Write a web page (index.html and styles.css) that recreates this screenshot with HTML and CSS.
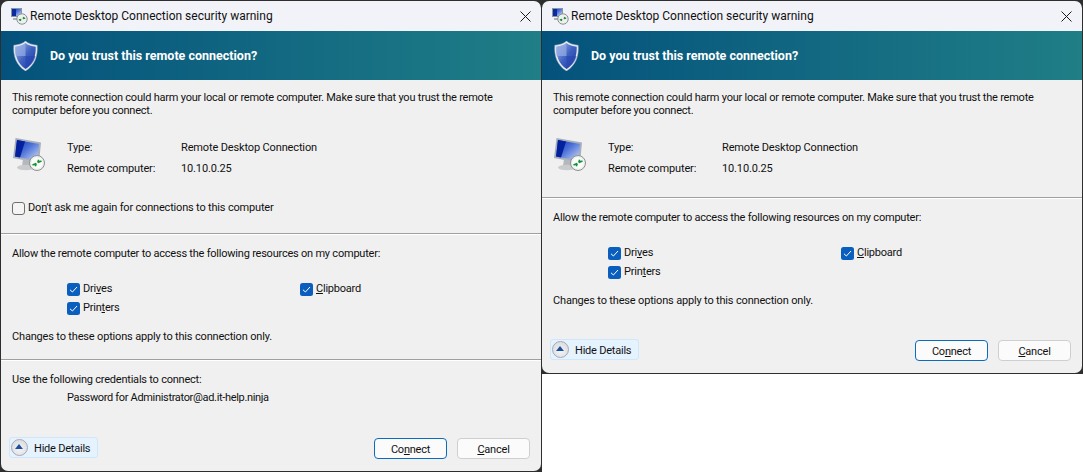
FILE: index.html
```html
<!DOCTYPE html>
<html lang="en">
<head>
<meta charset="utf-8">
<title>Remote Desktop Connection security warning</title>
<link rel="stylesheet" href="styles.css">
</head>
<body>
<svg class="defs" width="0" height="0" aria-hidden="true">
  <defs>
    <linearGradient id="sh" x1="0" y1="0" x2="1" y2="1"><stop offset="0" stop-color="#a9bdea"/><stop offset=".5" stop-color="#3f62c2"/><stop offset="1" stop-color="#1a359a"/></linearGradient>
    <linearGradient id="scr" x1="0" y1="0" x2="1" y2="1"><stop offset="0" stop-color="#0a2fb0"/><stop offset=".45" stop-color="#4a70d8"/><stop offset="1" stop-color="#d0dcf4"/></linearGradient>
    <symbol id="app" viewBox="0 0 18 18">
      <path d="M1 1h11v9H1z" fill="#8b95a8"/><path d="M2 2h9v7H2z" fill="url(#scr)"/><path d="M2 2h4v7H2z" fill="#0c2a9c"/>
      <path d="M3 11h6v2H3z" fill="#aab0ba"/>
      <circle cx="12" cy="12" r="5.200" fill="#eef0f0" stroke="#8a9090"/>
      <path d="M8.800 12.800 11 12.300M11 12.300 10.200 14M15.200 11.200 13 11.700M13 11.700 13.800 10" stroke="#1f8f35" stroke-width="1.200" fill="none"/>
    </symbol>
    <symbol id="pc" viewBox="0 0 32 34">
      <path d="M2.500 0 28 4.500 26 25 0 20z" fill="#a6aebb"/>
      <path d="M4 2 26 6 24.300 22.500 2 18.500z" fill="url(#scr)"/>
      <path d="M4 2 12 3.500 7 19.400 2 18.500z" fill="#04209c"/>
      <path d="M10 21 20 23v5H9z" fill="#b4b8bc"/>
      <ellipse cx="13" cy="29.500" rx="9" ry="2.800" fill="#c9cbcd"/>
      <circle cx="24" cy="25" r="7.500" fill="#eef0ee" stroke="#8a9290"/>
      <circle cx="24" cy="25" r="5.600" fill="#fafcfa"/>
      <path d="M19.500 27 23.200 25.500M23.200 25.500 22.300 28.300M28.500 23 24.800 24.500M24.800 24.500 25.700 21.700" stroke="#17913a" stroke-width="1.700" fill="none"/>
    </symbol>
    <symbol id="shield" viewBox="0 0 25 30">
      <path d="M12.500 0C10 2.500 5 4 .8 4.200 0 15 3 24 12.500 30 22 24 25 15 24.200 4.200 20 4 15 2.500 12.500 0z" fill="#e8ecf4" stroke="#9aa6c0" stroke-width=".5"/>
      <path d="M12.500 2C10 4.200 6 5.500 2.300 5.700 1.900 15 5 23 12.500 27.900 20 23 23.100 15 22.700 5.700 19 5.500 15 4.200 12.500 2z" fill="url(#sh)"/>
      <path d="M12.500 2V15H2.500C2.200 12 2.200 9 2.300 5.700 6 5.500 10 4.200 12.500 2z" fill="#95ade4" opacity=".7"/>
      <path d="M12.500 15H22.500C21.600 20 18.500 24 12.500 27.900z" fill="#2a49b0" opacity=".7"/>
    </symbol>
    <symbol id="check" viewBox="0 0 13 13">
      <rect width="13" height="13" rx="2.500" fill="#0a5fbe"/>
      <path d="M3 6.800 5.400 9 10 4" stroke="#fff" fill="none"/>
    </symbol>
    <symbol id="close" viewBox="0 0 11 11">
      <path d="M.5.500 10.500 10.500M10.500.500.500 10.500" stroke="#1a1a1a" fill="none"/>
    </symbol>
  </defs>
</svg>

<main class="desktop">
  <section class="win win-a">
    <header class="titlebar">
      <svg class="app-ico"><use href="#app"/></svg>
      <span class="title">Remote Desktop Connection security warning</span>
      <svg class="close-ico"><use href="#close"/></svg>
    </header>
    <div class="banner">
      <svg class="shield"><use href="#shield"/></svg>
      <strong>Do you trust this remote connection?</strong>
    </div>
    <div class="body">
      <div class="sec sec-info">
        <p class="msg">This remote connection could harm your local or remote computer. Make sure that you trust the remote<br>computer before you connect.</p>
        <div class="facts">
          <svg class="pc"><use href="#pc"/></svg>
          <dl class="rows">
            <dt>Type:</dt><dd>Remote Desktop Connection</dd>
            <dt>Remote computer:</dt><dd>10.10.0.25</dd>
          </dl>
        </div>
        <label class="dont"><span class="box"></span><span>Do<u>n</u>'t ask me again for connections to this computer</span></label>
      </div>
      <div class="sec sec-res">
        <p>Allow the remote computer to access the following resources on my computer:</p>
        <div class="opts">
          <div class="opt"><svg class="chk"><use href="#check"/></svg><span>Dri<u>v</u>es</span></div>
          <div class="opt"><svg class="chk"><use href="#check"/></svg><span><u>C</u>lipboard</span></div>
          <div class="opt"><svg class="chk"><use href="#check"/></svg><span>Prin<u>t</u>ers</span></div>
        </div>
        <p class="note">Changes to these options apply to this connection only.</p>
      </div>
      <div class="sec sec-cred">
        <p>Use the following credentials to connect:</p>
        <p class="cred">Password for Administrator@ad.it-help.ninja</p>
      </div>
      <footer class="foot">
        <div class="details"><span class="chev"></span><span class="details-label">Hide Details</span></div>
        <div class="btns">
          <div class="btn primary">Co<u>n</u>nect</div>
          <div class="btn"><u>C</u>ancel</div>
        </div>
      </footer>
    </div>
  </section>

  <section class="win win-b">
    <header class="titlebar">
      <svg class="app-ico"><use href="#app"/></svg>
      <span class="title">Remote Desktop Connection security warning</span>
      <svg class="close-ico"><use href="#close"/></svg>
    </header>
    <div class="banner">
      <svg class="shield"><use href="#shield"/></svg>
      <strong>Do you trust this remote connection?</strong>
    </div>
    <div class="body">
      <div class="sec sec-info">
        <p class="msg">This remote connection could harm your local or remote computer. Make sure that you trust the remote<br>computer before you connect.</p>
        <div class="facts">
          <svg class="pc"><use href="#pc"/></svg>
          <dl class="rows">
            <dt>Type:</dt><dd>Remote Desktop Connection</dd>
            <dt>Remote computer:</dt><dd>10.10.0.25</dd>
          </dl>
        </div>
      </div>
      <div class="sec sec-res">
        <p>Allow the remote computer to access the following resources on my computer:</p>
        <div class="opts">
          <div class="opt"><svg class="chk"><use href="#check"/></svg><span>Dri<u>v</u>es</span></div>
          <div class="opt"><svg class="chk"><use href="#check"/></svg><span><u>C</u>lipboard</span></div>
          <div class="opt"><svg class="chk"><use href="#check"/></svg><span>Prin<u>t</u>ers</span></div>
        </div>
        <p class="note">Changes to these options apply to this connection only.</p>
      </div>
      <footer class="foot">
        <div class="details"><span class="chev"></span><span class="details-label">Hide Details</span></div>
        <div class="btns">
          <div class="btn primary">Co<u>n</u>nect</div>
          <div class="btn"><u>C</u>ancel</div>
        </div>
      </footer>
    </div>
  </section>
</main>
</body>
</html>
```

FILE: styles.css
```css
* { box-sizing: border-box; }
html, body { margin: 0; height: 100%; background: #fff; overflow: hidden; }
body {
  font-family: Roboto, "Liberation Sans", sans-serif;
  font-size: 11px;
  letter-spacing: -0.22px;
  line-height: 14px;
  color: #111;
}
.defs { position: absolute; }
p { margin: 0; }
u { text-underline-offset: 1px; text-decoration-thickness: 1px; }

.desktop { display: flex; align-items: flex-start; width: 1083px; height: 472px; }
.win {
  display: flex;
  flex-direction: column;
  border: 1px solid #2e2e2e;
  background: #2e2e2e;
}
.win-a { width: 542px; height: 472px; }
.win-b { width: 541px; height: 374px; border-left: 0; }

.titlebar {
  display: flex;
  align-items: center;
  height: 30px;
  padding: 0 10px 0 9px;
  border-radius: 7px 7px 0 0;
  background: #f2f3f9;
  font-size: 12px;
  letter-spacing: 0;
}
.app-ico { width: 18px; height: 18px; margin-right: 2px; }
.title { flex: 1; }
.close-ico { width: 11px; height: 11px; }

.banner {
  display: flex;
  align-items: center;
  height: 49px;
  padding-left: 12px;
  background: linear-gradient(90deg, #04527c, #1f7e86);
  color: #fff;
  font-size: 12.500px;
  letter-spacing: 0;
}
.banner strong { margin-left: 12px; font-weight: 700; }
.shield { width: 25px; height: 30px; }

.body {
  flex: 1;
  display: flex;
  flex-direction: column;
  border-radius: 0 0 7px 7px;
  background: #f0f0f0;
}
.sec { padding: 0 11px; border-bottom: 1px solid #a0a0a0; box-shadow: 0 1px 0 #fff; }
.sec-info { padding-top: 11px; }
.msg { line-height: 13px; }
.facts { display: flex; margin-top: 21px; }
.pc { width: 32px; height: 34px; margin: 0 22px 0 1px; flex: none; }
.rows { display: grid; grid-template-columns: 114px auto; row-gap: 7px; margin: 3px 0 0; letter-spacing: -0.14px; }
dd { margin: 0; }
.dont { display: flex; align-items: center; gap: 3px; margin-top: 25px; letter-spacing: -0.18px; }
.win-a .sec-info { height: 154px; }
.win-b .sec-info { height: 118px; }
.box { width: 13px; height: 13px; border: 1px solid #6e6e6e; border-radius: 3px; background: #f4f4f4; }

.sec-res { padding-top: 13px; }
.win-a .sec-res { height: 126px; }
.win-b .sec-res { border: 0; box-shadow: none; height: 121px; }
.opts { display: grid; grid-template-columns: 233px auto; row-gap: 5px; margin: 21px 0 0 55px; }
.opt { display: flex; align-items: center; gap: 3px; }
.chk { width: 13px; height: 13px; }
.note { margin-top: 15px; letter-spacing: -0.17px; }

.sec-cred { padding-top: 13px; border: 0; box-shadow: none; }
.cred { margin: 4px 0 0 55px; letter-spacing: -0.33px; }

.foot {
  margin-top: auto;
  display: flex;
  align-items: flex-end;
  justify-content: space-between;
  padding: 0 11px 12px 8px;
}
.details {
  display: flex;
  align-items: center;
  gap: 6px;
  width: 89px;
  height: 21px;
  margin-bottom: 1px;
  padding: 0 0 0 1px;
  border: 1px solid #cfe6fb;
  border-radius: 3px;
  background: #e5f3ff;
}
.details-label { padding-top: 2px; }
.chev {
  width: 17px;
  height: 17px;
  border-radius: 50%;
  border: 1px solid #a8a8b0;
  background: radial-gradient(circle at 50% 60%, #f4f4f4, #d4d6dc);
  position: relative;
}
.chev::after {
  content: "";
  position: absolute;
  left: 3px;
  top: 4px;
  border: 4px solid transparent;
  border-top: 0;
  border-bottom: 5px solid #1c4f9c;
}
.btns { display: flex; gap: 10px; }
.btn {
  width: 73px;
  height: 21px;
  line-height: 21px;
  text-align: center;
  border: 1px solid #cfcfcf;
  border-radius: 4px;
  background: #fbfbfb;
}
.btn.primary { border-color: #0a6cbf; }
```
